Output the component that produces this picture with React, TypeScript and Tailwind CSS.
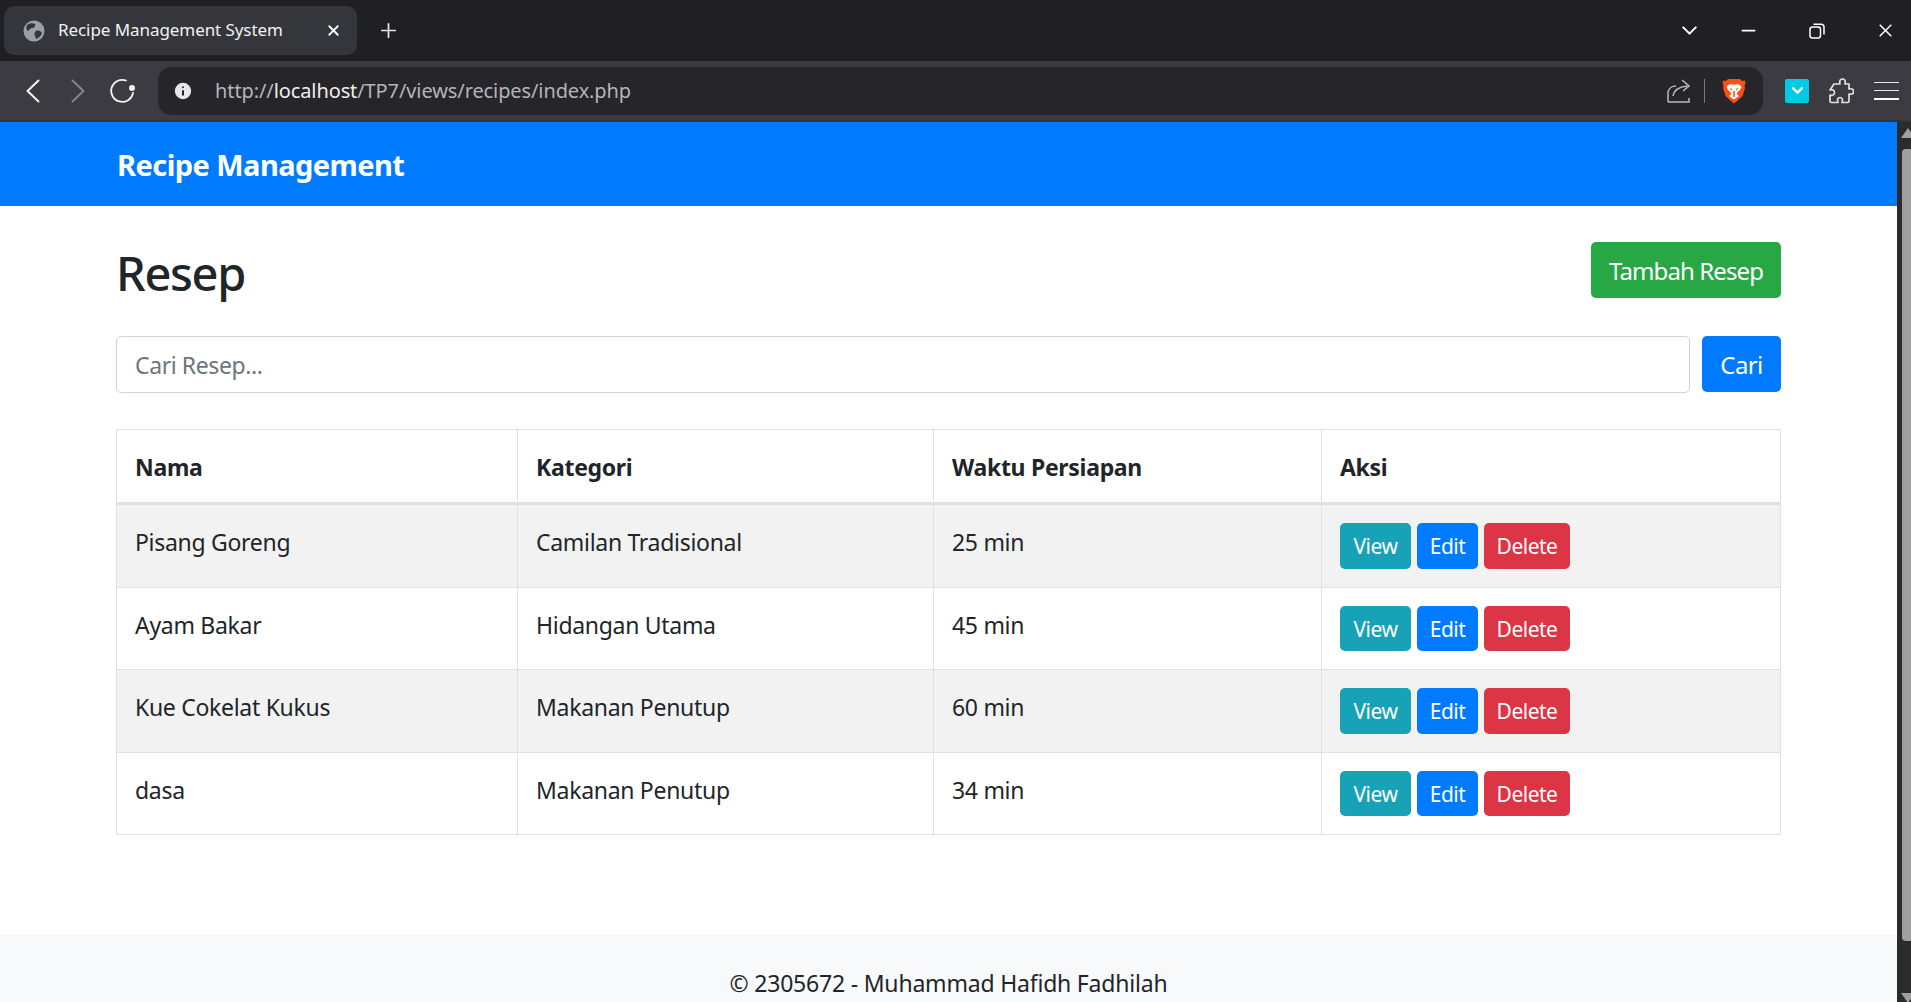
import { ChevronDown, Info, Minus, Plus, X } from "lucide-react"

const recipes = [
  { name: "Pisang Goreng", category: "Camilan Tradisional", time: "25 min" },
  { name: "Ayam Bakar", category: "Hidangan Utama", time: "45 min" },
  { name: "Kue Cokelat Kukus", category: "Makanan Penutup", time: "60 min" },
  { name: "dasa", category: "Makanan Penutup", time: "34 min" },
]

function BraveIcon() {
  return (
    <svg width="24" height="26" viewBox="0 0 24 26">
      <path d="M6 1 H18 L20 3 L23 2.500 L23.500 5 L22.500 8 L23 10 L20.500 18 L15 23 L12 25.500 L9 23 L3.500 18 L1 10 L1.500 8 L0.500 5 L1 2.500 L4 3 Z" fill="#fb4f14" />
      <path d="M6 7 L9.500 6 L12 7 L14.500 6 L18 7 L19.500 9 L18 12 L15.500 14 L15 16.500 L17 18 L12 21.500 L7 18 L9 16.500 L8.500 14 L6 12 L4.500 9 Z" fill="#fff" />
      <path d="M7.500 10 L10.500 11 L9.500 12.500 Z M16.500 10 L13.500 11 L14.500 12.500 Z M11.200 13 H12.800 V19 H11.200 Z" fill="#fb4f14" />
    </svg>
  )
}

function GlobeIcon() {
  return (
    <svg width="22" height="22" viewBox="0 0 22 22">
      <circle cx="11" cy="11" r="10.500" fill="#9aa0a6" />
      <path d="M4 5 C7 3 10 3 12 4 C13 6 11 8 9 8 C7 8 7 10 5 11 C3 10 3 7 4 5 Z M13 11 C15 10 18 11 19 13 C18 16 16 18 13 19 C12 17 13 16 11.500 15 C11 13 12 12 13 11 Z" fill="#35363b" />
    </svg>
  )
}

function Browser() {
  return (
    <div className="shrink-0 font-['Noto_Sans',sans-serif]">
      <div className="h-[61px] bg-[#1f1f24] flex items-start pl-1 text-white">
        <div className="mt-[6px] w-[353px] h-[49px] rounded-[10px] bg-[#35363b] flex items-center pl-[19px] pr-[15px]">
          <GlobeIcon />
          <span className="ml-[13px] -mt-[2px] text-[17px] tracking-[-0.07px] text-[#f1f1f1] whitespace-nowrap">Recipe Management System</span>
          <X className="ml-auto text-white" size={17} strokeWidth={2.6} />
        </div>
        <Plus className="ml-[20px] mt-[19px] text-[#e8e8e8]" size={23} strokeWidth={1.8} />
        <div className="ml-auto flex items-center mt-[18px] text-white">
          <ChevronDown size={25} strokeWidth={2} />
          <Minus className="ml-[36px]" size={21} strokeWidth={2} />
          <svg className="ml-[50px]" width="16" height="16" viewBox="0 0 16 16" fill="none" stroke="#fff" strokeWidth="1.5">
            <rect x="1" y="4" width="10.500" height="11" rx="2.500" />
            <path d="M4.500 1.200 H12 A3 3 0 0 1 15 4.200 V11.500" />
          </svg>
          <X className="ml-[50px] mr-[15px]" size={21} strokeWidth={1.7} strokeLinecap="square" />
        </div>
      </div>
      <div className="h-[61px] bg-[#3b3b41] border-b-2 border-[#34343a] flex items-center text-white">
        <svg className="ml-[26px]" width="14" height="24" viewBox="0 0 14 24" fill="none" stroke="#f3f3f3" strokeWidth="2" strokeLinecap="round" strokeLinejoin="round">
          <path d="M12.500 1.500 L1.500 12 L12.500 22.500" />
        </svg>
        <svg className="ml-[31px]" width="14" height="24" viewBox="0 0 14 24" fill="none" stroke="#85858a" strokeWidth="2" strokeLinecap="round" strokeLinejoin="round">
          <path d="M1.500 1.500 L12.500 12 L1.500 22.500" />
        </svg>
        <svg className="ml-[25px]" width="26" height="26" viewBox="0 0 26 26" fill="none" stroke="#f3f3f3" strokeWidth="1.800">
          <path d="M23 15 A11 11 0 1 1 16 2.500" strokeLinecap="round" />
          <circle cx="22" cy="10" r="3" fill="#f3f3f3" stroke="none" />
        </svg>
        <div className="ml-[22px] w-[1605px] h-[48px] rounded-[14px] bg-[#25252a] flex items-center pl-[14px] pr-[17px]">
          <Info className="text-[#25252a]" size={22} fill="#e8e8ec" strokeWidth={2.2} />
          <span className="ml-[21px] text-[20px] tracking-[-0.1px] text-[#b4b4ba] whitespace-nowrap">
            http://<span className="text-[#eeeeee]">localhost</span>/TP7/views/recipes/index.php
          </span>
          <svg className="ml-auto" width="24" height="24" viewBox="0 0 24 24" fill="none" stroke="#bcbcc0" strokeWidth="1.500">
            <path d="M1 23 V13 A8 8 0 0 1 9 7" />
            <path d="M1 23 H22 V19" />
            <path d="M6 17 C7 11 11 8 20 7 M15 1 L22 7 L16 12" />
          </svg>
          <div className="ml-[13px] w-px h-[24px] bg-[#77777c]" />
          <div className="ml-[17px] flex">
            <BraveIcon />
          </div>
        </div>
        <div className="ml-[22px] w-[24px] h-[24px] rounded-[2px] bg-[#00cbe6] flex items-center justify-center">
          <ChevronDown className="text-white" size={17} strokeWidth={3.4} />
        </div>
        <svg className="ml-[19px]" width="26" height="26" viewBox="0 0 26 26" fill="none" stroke="#e2e2e2" strokeWidth="1.700" strokeLinejoin="round">
          <path d="M9 6 H12 C11 2 13 1 14.500 1 C16 1 18 2 17 6 H21 V11 C25 10 25.500 12 25.500 13.500 C25.500 15 25 17 21 16 V23 A1.500 1.500 0 0 1 19.500 24.500 H14 C15 21 14 19.500 12 19.500 C10 19.500 9 21 10 24.500 H3.500 A1.500 1.500 0 0 1 2 23 V17 C5 18 6.500 16.500 6.500 14.500 C6.500 12.500 5 11 2 12 L6 6 Z" />
        </svg>
        <div className="ml-[20px] w-[25px] flex flex-col gap-[7px]">
          <div className="h-[1px] bg-[#e8e8e8]" />
          <div className="h-[1px] bg-[#e8e8e8]" />
          <div className="h-[2px] bg-[#ffffff]" />
        </div>
      </div>
    </div>
  )
}

function ActionButton({ label, className }: { label: string; className: string }) {
  return (
    <button className={`h-[45.5px] pt-[2px] rounded-[5px] text-white text-[21px] tracking-[-0.5px] leading-none ${className}`}>
      {label}
    </button>
  )
}

export default function App() {
  return (
    <div className="h-screen overflow-hidden flex flex-col bg-white text-[#212529] font-['Noto_Sans',sans-serif]">
      <Browser />
      <div className="flex flex-1 min-h-0">
        <div className="flex-1 min-w-0 flex flex-col">
          <nav className="h-[84px] shrink-0 bg-[#007bff] flex items-center pl-[117px]">
            <span className="text-white text-[29px] font-bold tracking-[-0.55px] mt-[2px]">Recipe Management</span>
          </nav>

          <main className="mx-[116px] flex-1">
            <div className="flex justify-between items-start pt-[36px]">
              <h1 className="text-[47px] font-medium leading-[62px] tracking-[-1.3px]">Resep</h1>
              <button className="w-[190px] h-[56px] pt-[2px] rounded-[5px] bg-[#28a745] text-white text-[24px] tracking-[-0.9px]">
                Tambah Resep
              </button>
            </div>

            <div className="flex gap-3 mt-[32px]">
              <input
                placeholder="Cari Resep..."
                className="flex-1 h-[57px] rounded-[5px] border border-[#ced4da] px-[18px] text-[23px] tracking-[-0.4px] placeholder:text-[#6c757d]"
              />
              <button className="w-[79px] h-[56px] pt-[2px] rounded-[5px] bg-[#007bff] text-white text-[24px] tracking-[-0.6px]">
                Cari
              </button>
            </div>

            <table className="mt-[36px] w-[1664px] table-fixed border-collapse text-[23px] tracking-[-0.3px]">
              <colgroup>
                <col className="w-[401px]" />
                <col className="w-[416px]" />
                <col className="w-[388px]" />
                <col className="w-[459px]" />
              </colgroup>
              <thead>
                <tr className="text-left">
                  {["Nama", "Kategori", "Waktu Persiapan", "Aksi"].map((h) => (
                    <th key={h} className="border border-[#dee2e6] border-b-[3px] px-[18px] pt-[19px] pb-[17px] leading-[36px] font-bold">
                      {h}
                    </th>
                  ))}
                </tr>
              </thead>
              <tbody>
                {recipes.map((r, i) => (
                  <tr key={i} className={i % 2 === 0 ? "bg-[#f2f2f2]" : ""}>
                    <td className="border border-[#dee2e6] px-[18px] pt-[19px] pb-[17px] align-top leading-[36px]">{r.name}</td>
                    <td className="border border-[#dee2e6] px-[18px] pt-[19px] pb-[17px] align-top leading-[36px]">{r.category}</td>
                    <td className="border border-[#dee2e6] px-[18px] pt-[19px] pb-[17px] align-top leading-[36px]">{r.time}</td>
                    <td className="border border-[#dee2e6] px-[18px] py-[18px] align-top">
                      <div className="flex gap-[6px]">
                        <ActionButton label="View" className="w-[71px] bg-[#17a2b8]" />
                        <ActionButton label="Edit" className="w-[61px] bg-[#007bff]" />
                        <ActionButton label="Delete" className="w-[86px] bg-[#dc3545]" />
                      </div>
                    </td>
                  </tr>
                ))}
              </tbody>
            </table>
          </main>

          <footer className="h-[67px] shrink-0 bg-[#f8f9fa] pt-[30px] text-center text-[23px] leading-[36px] tracking-[-0.2px]">
            © 2305672 - Muhammad Hafidh Fadhilah
          </footer>
        </div>

        <div className="w-[14px] shrink-0 bg-[#2b2b2b] pl-[4px] pt-[6px] flex flex-col overflow-hidden">
          <div className="shrink-0 w-0 h-0 border-x-[7px] border-x-transparent border-b-[10px] border-b-[#9f9f9f]" />
          <div className="shrink-0 ml-[1px] mt-[11px] w-[9px] h-[792px] rounded-l-[4px] bg-[#9f9f9f]" />
          <div className="shrink-0 mt-[52px] w-0 h-0 border-x-[7px] border-x-transparent border-t-[10px] border-t-[#9f9f9f]" />
        </div>
      </div>
    </div>
  )
}
